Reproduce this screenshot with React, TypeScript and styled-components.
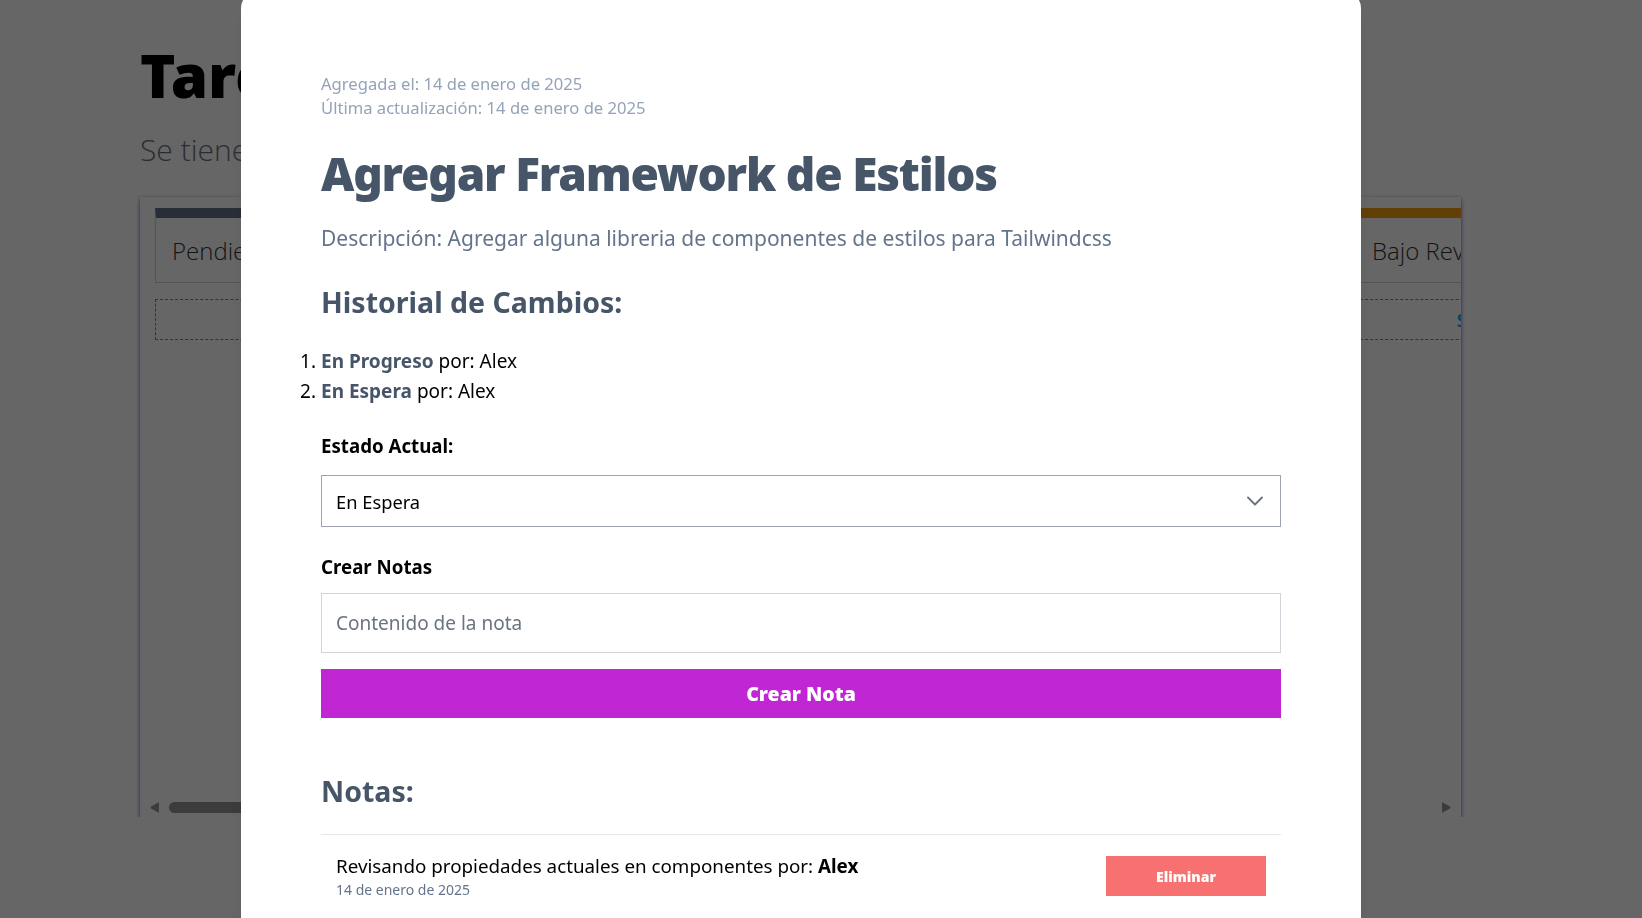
import React from "react";
import styled, { createGlobalStyle } from "styled-components";
import { ChevronDown } from "lucide-react";

const GlobalStyle = createGlobalStyle`
  *, *::before, *::after { box-sizing: border-box; }
  html, body { margin: 0; padding: 0; }
  body {
    font-family: "Noto Sans", "Open Sans", sans-serif;
    background: #ffffff;
    color: #000000;
    overflow: hidden;
  }
`;

/* ---------- page behind the dialog ---------- */

const Page = styled.main`
  padding: 45px 181px 0 140px;
`;

const PageTitle = styled.h1`
  margin: 0;
  font-size: 60px;
  line-height: 60px;
  font-weight: 900;
  color: #000000;
`;

const PageLead = styled.p`
  margin: 27px 0 0;
  font-family: "Open Sans", "Noto Sans", sans-serif;
  font-size: 30px;
  line-height: 36px;
  font-weight: 300;
  color: #6b7280;
`;

const Board = styled.section`
  margin-top: 29px;
  height: 620px;
  padding-top: 11px;
  display: flex;
  flex-direction: column;
  background: #ffffff;
  box-shadow: 0 4px 5px -1px rgba(139, 92, 246, 0.95),
    0 1px 3px 0 rgba(139, 92, 246, 0.5), 0 0 3px rgba(0, 0, 0, 0.15);
`;

const Lanes = styled.div`
  flex: 1;
  min-height: 0;
  display: flex;
  gap: 20px;
  padding-left: 15px;
  overflow: hidden;
`;

const ScrollBar = styled.div`
  height: 16px;
  flex: 0 0 16px;
  display: flex;
  align-items: flex-start;
  padding: 1px 10px 0 10px;
`;

const ScrollArrow = styled.svg`
  flex: 0 0 9px;
  width: 9px;
  height: 11px;
  fill: #969696;
`;

const ScrollThumb = styled.div<{ $size: number }>`
  flex: 0 0 ${(p) => p.$size}px;
  height: 11px;
  margin-left: 10px;
  border-radius: 6px;
  background: #969696;
`;

const ScrollEnd = styled.div`
  margin-left: auto;
  display: flex;
`;

const Column = styled.div`
  flex: 0 0 380px;
`;

const ColumnHeader = styled.h3<{ $accent: string }>`
  margin: 0;
  padding: 17px 16px 15px;
  font-family: "Open Sans", "Noto Sans", sans-serif;
  font-size: 24px;
  line-height: 32px;
  font-weight: 300;
  color: #333333;
  background: #ffffff;
  border: 1px solid #cbd5e1;
  border-top: 10px solid ${(p) => p.$accent};
`;

const DropZone = styled.div`
  margin-top: 16px;
  height: 41px;
  display: grid;
  place-content: center;
  border: 1px dashed #a855f7;
  font-size: 18px;
  font-weight: 600;
  text-transform: uppercase;
  color: #0ea5e9;
  white-space: nowrap;
`;

/* ---------- dialog ---------- */

const Overlay = styled.div`
  position: fixed;
  inset: 0;
  background: rgba(0, 0, 0, 0.6);
  display: flex;
  justify-content: center;
  align-items: flex-start;
  padding-right: 40px;
  overflow: hidden;
`;

const Panel = styled.div`
  flex: 0 0 1120px;
  margin-top: -8px;
  padding: 80px;
  background: #ffffff;
  border-radius: 16px;
  box-shadow: 0 20px 25px -5px rgba(0, 0, 0, 0.1);
`;

const Meta = styled.p`
  margin: 0;
  font-size: 16.6px;
  line-height: 24px;
  color: #94a3b8;
`;

const TaskTitle = styled.h2`
  margin: 29px 0 0;
  font-size: 46px;
  line-height: 48px;
  font-weight: 900;
  letter-spacing: -1.2px;
  color: #475569;
`;

const Description = styled.p`
  margin: 27px 0 0;
  font-size: 21px;
  line-height: 28px;
  color: #64748b;
`;

const SectionTitle = styled.h3<{ $gap: number }>`
  margin: ${(p) => p.$gap}px 0 0;
  font-size: 28.5px;
  line-height: 36px;
  font-weight: 700;
  color: #475569;
`;

const History = styled.ol`
  margin: 26px 0 0;
  padding: 0;
  list-style: decimal outside;
  font-size: 19px;
  line-height: 30px;
  color: #000000;
`;

const Status = styled.span`
  font-weight: 700;
  color: #475569;
`;

const FieldLabel = styled.label<{ $gap: number }>`
  display: block;
  margin-top: ${(p) => p.$gap}px;
  font-size: 18.7px;
  line-height: 28px;
  font-weight: 700;
  color: #000000;
`;

const SelectWrap = styled.div`
  position: relative;
  margin-top: 15px;
`;

const StatusSelect = styled.select`
  display: block;
  width: 100%;
  height: 52px;
  padding: 0 14px;
  appearance: none;
  border: 1px solid #9ca3af;
  border-radius: 0;
  background: #ffffff;
  font-family: inherit;
  font-size: 18.3px;
  color: #000000;
`;

const SelectIcon = styled.span`
  position: absolute;
  right: 12px;
  top: 50%;
  transform: translateY(-50%);
  display: flex;
  color: #6b7280;
  pointer-events: none;
`;

const NoteInput = styled.input`
  display: block;
  width: 100%;
  height: 60px;
  margin-top: 12px;
  padding: 0 14px;
  border: 1px solid #d1d5db;
  border-radius: 0;
  font-family: inherit;
  font-size: 19px;
  color: #000000;
  &::placeholder {
    color: #6b7280;
  }
`;

const SubmitButton = styled.button`
  display: block;
  width: 100%;
  height: 49px;
  margin-top: 16px;
  border: none;
  background: #c026d3;
  color: #ffffff;
  font-family: inherit;
  font-size: 19.5px;
  font-weight: 900;
  cursor: pointer;
`;

const NotesList = styled.ul`
  margin: 25px 0 0;
  padding: 0;
  list-style: none;
  border-top: 1px solid #e5e7eb;
`;

const NoteRow = styled.li`
  display: flex;
  justify-content: space-between;
  align-items: center;
  padding: 17px 15px;
`;

const NoteText = styled.p`
  margin: 0;
  font-size: 18.8px;
  line-height: 28px;
  color: #000000;
  strong {
    font-weight: 700;
  }
`;

const NoteDate = styled.p`
  margin: 0;
  font-size: 14px;
  line-height: 20px;
  color: #64748b;
`;

const DeleteButton = styled.button`
  width: 160px;
  height: 40px;
  border: none;
  background: #f87171;
  color: #ffffff;
  font-family: inherit;
  font-size: 14px;
  font-weight: 900;
  cursor: pointer;
`;

const columns = [
  { name: "Pendiente", accent: "#64748b" },
  { name: "En Espera", accent: "#ef4444" },
  { name: "En Progreso", accent: "#3b82f6" },
  { name: "Bajo Revisión", accent: "#f59e0b" },
  { name: "Completado", accent: "#10b981" },
];

export default function App() {
  return (
    <>
      <GlobalStyle />
      <Page>
        <PageTitle>Tareas</PageTitle>
        <PageLead>Se tienen las siguientes tareas</PageLead>
        <Board>
          <Lanes>
            {columns.map((c) => (
              <Column key={c.name}>
                <ColumnHeader $accent={c.accent}>{c.name}</ColumnHeader>
                <DropZone>Soltar tarea aquí</DropZone>
              </Column>
            ))}
          </Lanes>
          <ScrollBar aria-hidden="true">
            <ScrollArrow viewBox="0 0 9 11">
              <path d="M8.2 0.6 L1 4.6 Q0 5.5 1 6.4 L8.2 10.4 Q9 10.8 9 9.9 L9 1.1 Q9 0.2 8.2 0.6 Z" />
            </ScrollArrow>
            <ScrollThumb $size={840} />
            <ScrollEnd>
              <ScrollArrow viewBox="0 0 9 11">
                <path d="M0.8 0.6 L8 4.6 Q9 5.5 8 6.4 L0.8 10.4 Q0 10.8 0 9.9 L0 1.1 Q0 0.2 0.8 0.6 Z" />
              </ScrollArrow>
            </ScrollEnd>
          </ScrollBar>
        </Board>
      </Page>

      <Overlay>
        <Panel role="dialog">
          <Meta>Agregada el: 14 de enero de 2025</Meta>
          <Meta>Última actualización: 14 de enero de 2025</Meta>
          <TaskTitle>Agregar Framework de Estilos</TaskTitle>
          <Description>
            Descripción: Agregar alguna libreria de componentes de estilos para Tailwindcss
          </Description>
          <SectionTitle $gap={32}>Historial de Cambios:</SectionTitle>
          <History>
            <li>
              <Status>En Progreso</Status> por: Alex
            </li>
            <li>
              <Status>En Espera</Status> por: Alex
            </li>
          </History>

          <FieldLabel $gap={26} htmlFor="status">
            Estado Actual:
          </FieldLabel>
          <SelectWrap>
            <StatusSelect id="status" defaultValue="onHold">
              <option value="pending">Pendiente</option>
              <option value="onHold">En Espera</option>
              <option value="inProgress">En Progreso</option>
              <option value="underReview">Bajo Revisión</option>
              <option value="completed">Completado</option>
            </StatusSelect>
            <SelectIcon>
              <ChevronDown size={28} strokeWidth={1.6} />
            </SelectIcon>
          </SelectWrap>

          <FieldLabel $gap={26} htmlFor="note">
            Crear Notas
          </FieldLabel>
          <NoteInput id="note" type="text" placeholder="Contenido de la nota" />
          <SubmitButton type="button">Crear Nota</SubmitButton>

          <SectionTitle $gap={55}>Notas:</SectionTitle>
          <NotesList>
            <NoteRow>
              <div>
                <NoteText>
                  Revisando propiedades actuales en componentes por: <strong>Alex</strong>
                </NoteText>
                <NoteDate>14 de enero de 2025</NoteDate>
              </div>
              <DeleteButton type="button">Eliminar</DeleteButton>
            </NoteRow>
          </NotesList>
        </Panel>
      </Overlay>
    </>
  );
}
